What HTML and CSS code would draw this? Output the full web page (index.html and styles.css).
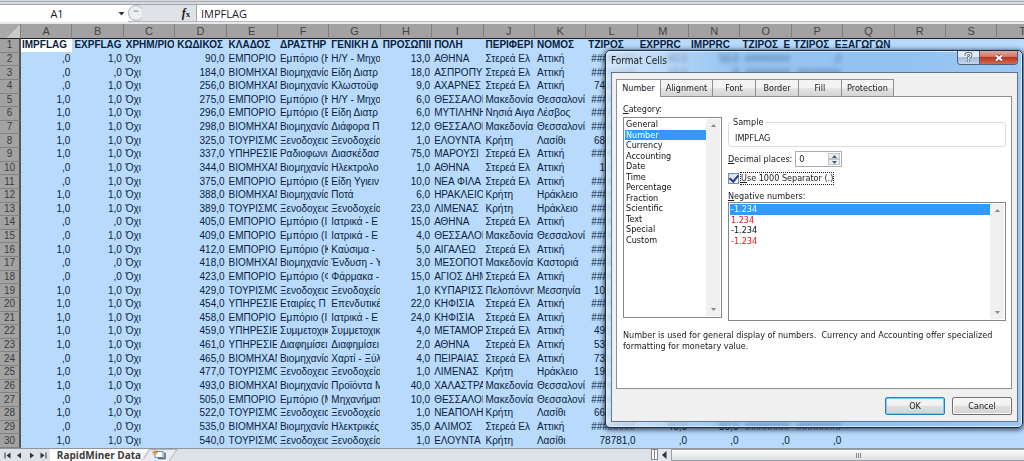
FILE: index.html
```
<!DOCTYPE html>
<html lang="en">
<head>
<meta charset="utf-8">
<title>RapidMiner Data</title>
<link rel="stylesheet" href="styles.css">
</head>
<body>
<div class="app">
  <header class="formula-bar">
    <div class="name-box">
      <input class="name-input" type="text" value="A1" aria-label="Name box">
      <button class="name-arrow" type="button" aria-label="Name list"><svg width="7" height="4" viewBox="0 0 7 4"><path d="M0.5 0h6L3.5 3.6z" fill="#333"/></svg></button>
    </div>
    <div class="fx-box">
      <svg class="fx-handle" width="14" height="16" viewBox="0 0 14 16"><circle cx="8" cy="8" r="7.5" fill="#eceff2" stroke="#b3b8be"/><path d="M5 7a3 2 0 0 1 6 0z" fill="#b3b8be"/></svg>
      <button class="fx-button" type="button" aria-label="Insert function"><i>f</i><small>x</small></button>
    </div>
    <input class="formula-input" type="text" value="IMPFLAG" aria-label="Formula bar">
  </header>

  <main class="sheet">
    <table class="grid">
      <thead><tr id="letters"></tr></thead>
      <tbody id="rows"></tbody>
    </table>
  </main>

  <footer class="tab-bar">
    <div class="sheet-nav">
      <button type="button" aria-label="First sheet"><svg width="7" height="7" viewBox="0 0 7 7"><path d="M0.5 0.5h1v6h-1zM6.5 0.5v6l-4-3z" fill="#333"/></svg></button>
      <button type="button" aria-label="Previous sheet"><svg width="7" height="7" viewBox="0 0 7 7"><path d="M5 0.5v6l-4-3z" fill="#333"/></svg></button>
      <button type="button" aria-label="Next sheet"><svg width="7" height="7" viewBox="0 0 7 7"><path d="M2 0.5v6l4-3z" fill="#333"/></svg></button>
      <button type="button" aria-label="Last sheet"><svg width="7" height="7" viewBox="0 0 7 7"><path d="M0.5 0.5v6l4-3zM5.5 0.5h1v6h-1z" fill="#333"/></svg></button>
    </div>
    <button class="sheet-tab" type="button">RapidMiner Data</button>
    <button class="new-sheet" type="button" aria-label="New sheet">
      <svg width="36" height="12" viewBox="0 0 36 12"><path d="M-2 12L6 0.500h27L25 12" fill="#e9ecf0" stroke="#b0b5bb"/><path d="M11 2.500h8v6h-8z" fill="#fff" stroke="#6b86ae"/><path d="M14 9.500h7v-6" fill="none" stroke="#4a6796" stroke-width="1.500"/><path d="M11 0.500v6M8 3.500h6M9 1.500l4 4M13 1.500l-4 4" stroke="#d9913a"/></svg>
    </button>
    <div class="scroll">
      <span class="split"></span>
      <button class="scroll-left" type="button" aria-label="Scroll left"><svg width="5" height="8" viewBox="0 0 5 8"><path d="M4.500 0v8L0 4z" fill="#333"/></svg></button>
      <div class="scroll-thumb"><i></i><i></i><i></i></div>
    </div>
  </footer>

  <section class="dialog" role="dialog" aria-labelledby="dialog-title">
    <div class="title-bar">
      <h1 id="dialog-title">Format Cells</h1>
      <div class="window-buttons">
        <button class="help" type="button" aria-label="Help"><svg width="9" height="11" viewBox="0 0 9 11"><path d="M2 4V3.300Q2 1.500 4.500 1.500T7 3.500Q7 4.600 4.700 5.500V7.200M4.700 8.200v1.600" fill="none" stroke="#47566b" stroke-width="2.800"/><path d="M2 4V3.300Q2 1.500 4.500 1.500T7 3.500Q7 4.600 4.700 5.500V7.200M4.700 8.200v1.600" fill="none" stroke="#fff" stroke-width="1.300"/></svg></button>
        <button class="close" type="button" aria-label="Close"><svg width="10" height="8" viewBox="0 0 10 8"><path d="M2 1.500l6 5M8 1.500l-6 5" stroke="#6b2a22" stroke-width="3.400"/><path d="M2 1.500l6 5M8 1.500l-6 5" stroke="#fff" stroke-width="2.200"/></svg></button>
      </div>
    </div>
    <div class="client">
      <div class="tabs" role="tablist">
        <button class="tab tab-active" type="button" role="tab" aria-selected="true">Number</button>
        <button class="tab tab-wide" type="button" role="tab">Alignment</button>
        <button class="tab" type="button" role="tab">Font</button>
        <button class="tab" type="button" role="tab">Border</button>
        <button class="tab" type="button" role="tab">Fill</button>
        <button class="tab tab-wide" type="button" role="tab">Protection</button>
      </div>
      <div class="panel">
        <div class="columns">
          <div class="category">
            <label for="category"><u>C</u>ategory:</label>
            <div class="list">
              <select id="category" size="12">
                <option>General</option><option selected>Number</option><option>Currency</option><option>Accounting</option><option>Date</option><option>Time</option><option>Percentage</option><option>Fraction</option><option>Scientific</option><option>Text</option><option>Special</option><option>Custom</option>
              </select>
              <div class="list-bar"><svg width="5" height="3" viewBox="0 0 5 3"><path d="M0 3h5L2.500 0z" fill="#888"/></svg><svg width="5" height="3" viewBox="0 0 5 3"><path d="M0 0h5L2.500 3z" fill="#888"/></svg></div>
            </div>
          </div>
          <div class="settings">
            <fieldset class="sample">
              <legend>Sample</legend>
              <output>IMPFLAG</output>
            </fieldset>
            <div class="decimals">
              <label for="decimals"><u>D</u>ecimal places:</label>
              <div class="spinner">
                <input id="decimals" type="text" value="0">
                <div class="spin-buttons">
                  <button type="button" aria-label="More"><svg width="5" height="3" viewBox="0 0 5 3"><path d="M0 3h5L2.500 0z" fill="#4a5578"/></svg></button>
                  <button type="button" aria-label="Fewer"><svg width="5" height="3" viewBox="0 0 5 3"><path d="M0 0h5L2.500 3z" fill="#4a5578"/></svg></button>
                </div>
              </div>
            </div>
            <div class="separator">
              <input id="separator" type="checkbox" checked>
              <label for="separator"><u>U</u>se 1000 Separator (.)</label>
            </div>
            <label for="negative"><u>N</u>egative numbers:</label>
            <div class="list">
              <select id="negative" size="4">
                <option selected>-1.234</option><option class="red">1.234</option><option>-1.234</option><option class="red">-1.234</option>
              </select>
              <div class="list-bar"><svg width="5" height="3" viewBox="0 0 5 3"><path d="M0 3h5L2.500 0z" fill="#888"/></svg><svg width="5" height="3" viewBox="0 0 5 3"><path d="M0 0h5L2.500 3z" fill="#888"/></svg></div>
            </div>
          </div>
        </div>
        <p class="hint">Number is used for general display of numbers.&nbsp; Currency and Accounting offer specialized formatting for monetary value.</p>
      </div>
      <div class="actions">
        <button class="action action-default" type="button">OK</button>
        <button class="action" type="button">Cancel</button>
      </div>
    </div>
  </section>
</div>
<script src="sheet.js"></script>
</body>
</html>
```
FILE: styles.css
```
* { box-sizing: border-box; }
html, body { height: 100%; margin: 0; }
body { overflow: hidden; color: #1a1a1a; font-family: "Open Sans", "Noto Sans", sans-serif; font-size: 11px; }
button, input, select { margin: 0; padding: 0; border: 0; background: none; color: inherit; font: inherit; outline: 0; }
svg { display: block; }

.app { position: relative; display: flex; flex-direction: column; height: 100%; min-height: 461px; overflow: hidden; }

/* Formula bar */
.formula-bar { flex: none; display: flex; height: 24px; padding: 5px 0 2px; background: linear-gradient(#d3d8dc 0, #d3d8dc 1px, #a9adb1 1px, #a9adb1 2px, #d5dade 2px, #d5dade 4px, #a2a6ab 4px, #a2a6ab 5px, #fff 5px, #fff 21px, #b5b9bd 21px, #b5b9bd 22px, #e6e8ea 22px); }
.name-box { display: flex; width: 128px; background: #fff; }
.name-input { flex: 1; width: 0; text-align: center; padding-bottom: 1px; }
.name-arrow { display: grid; place-items: center; width: 14px; }
.fx-box { display: flex; justify-content: space-between; width: 69px; margin-bottom: 1px; background: #dfe3e8; border-right: 1px solid #a2a6ab; border-radius: 8px 0 0 8px; }
.fx-button { width: 20px; font: bold 12px/14px "Liberation Serif", serif; text-align: center; }
.fx-button small { font-size: 9px; }
.formula-input { flex: 1; min-width: 0; padding: 0 4px 1px; }

/* Spreadsheet grid */
.sheet { flex: 1; min-height: 0; overflow: hidden; background: #b7dafd; }
.grid { width: 1049px; height: 100%; table-layout: fixed; border-collapse: separate; border-spacing: 0; font-family: "Liberation Sans", Arial, sans-serif; font-size: 10px; line-height: 12px; color: #0b1d3a; }
.grid th, .grid td { padding: 0; overflow: hidden; white-space: nowrap; text-align: left; }
.grid thead th { height: 15px; background: #a2a2a2; border-right: 1px solid #808080; border-bottom: 1px solid #222; font-size: 11px; font-weight: normal; text-align: center; color: #444; }
.grid thead th:first-child { width: 21px; background: linear-gradient(135deg, #a9a9a9 60%, #c9c9c9 60%); }
.grid tbody th { background: #a2a2a2; border-right: 2px solid #555; border-bottom: 1px solid #838383; font-weight: normal; text-align: center; color: #3c3c3c; }
.grid td { padding-left: 2px; border-right: 1px solid #bfd9f2; border-bottom: 1px solid #bcd9f6; }
.grid .num { padding: 0 1px 0 0; text-align: right; }
.grid .head td { font-weight: bold; border-right-color: transparent; }
.grid .head td:nth-child(2) { background: #fff; padding-left: 1px; }
.grid .head .spill { overflow: visible; }

/* Sheet tabs and scroll bar */
.tab-bar { flex: none; display: flex; height: 13px; background: #dde1e8; border-top: 1px solid #8f959c; }
.sheet-nav { display: flex; align-items: center; gap: 5px; width: 50px; padding-left: 4px; }
.sheet-tab { width: 98px; background: #fff; font-size: 10px; font-weight: bold; line-height: 12px; text-align: center; color: #3b3b3b; clip-path: polygon(0 0, 100% 0, 92% 100%, 0 100%); }
.new-sheet { margin-left: -4px; }
.scroll { display: flex; flex: 1; align-items: stretch; margin-left: 471px; background: #e4e7ec; }
.split { width: 7px; margin: 0 0 1px; background: linear-gradient(90deg, #fff 2px, #888 2px, #888 3px, #fff 3px); border: 1px solid #888; }
.scroll-left { display: grid; place-items: center; width: 13px; }
.scroll-thumb { display: flex; flex: 1; align-items: center; justify-content: center; gap: 1px; padding-left: 20px; border: 1px solid #9ba1aa; border-right: 0; background: linear-gradient(#fafbfc, #dadde2); }
.scroll-thumb i { width: 1px; height: 5px; background: #888; }

/* Format Cells dialog, floating over the sheet */
.dialog { position: absolute; top: 50px; right: 1px; width: 418px; padding: 0 4px 5px 5px; border: 1px solid #1c2c40; border-radius: 5px; background: linear-gradient(90deg, rgba(225, 238, 252, .75), rgba(120, 175, 230, .5) 30%, rgba(120, 178, 235, .6) 70%, rgba(150, 195, 240, .8)); backdrop-filter: blur(2px); box-shadow: inset 0 0 0 1px rgba(235, 245, 255, .8), 0 1px 5px 1px rgba(0, 10, 30, .7); font-family: "DejaVu Sans Condensed", "DejaVu Sans", sans-serif; font-size: 9px; line-height: 12px; }
.title-bar { display: flex; justify-content: space-between; height: 21px; }
.title-bar h1 { margin: 0; padding-top: 4px; font: inherit; font-size: 10px; }
.window-buttons { display: flex; height: 14px; border: 1px solid #4e6078; border-top: 0; border-radius: 0 0 4px 4px; overflow: hidden; }
.help, .close { display: grid; place-items: center; }
.help { width: 22px; background: linear-gradient(#dfeaf6 45%, #a5bdd7 50%, #c3d6ea); border-right: 1px solid #4e6078; }
.close { width: 37px; background: linear-gradient(#e0a397 5%, #cf7768 45%, #b93722 50%, #d26a50); }
.client { padding: 6px 5px 6px 4px; background: #f0f0f0; border: 1px solid #61748c; }
.tabs { display: flex; align-items: flex-end; }
.tab { width: 43px; height: 17px; border: 1px solid #8d8f93; border-left-width: 0; border-bottom: 0; background: linear-gradient(#f4f4f4 45%, #e2e2e2 55%, #d5d5d5); }
.tab-wide { width: 52px; }
.tab-active { width: 45px; height: 18px; border-left-width: 1px; background: #fff; margin-bottom: -1px; padding-bottom: 2px; position: relative; }
.panel { height: 293px; padding: 7px 5px 0 6px; border: 1px solid #8d8f93; background: #fff; }
.columns { display: flex; gap: 6px; height: 217px; }
.category { display: flex; flex-direction: column; width: 99px; height: 214px; }
.category label { height: 13px; line-height: 11px; }
.list { display: flex; flex: 1; min-height: 0; padding: 1px; border: 1px solid #828790; }
.list select { flex: 1; min-width: 0; appearance: none; overflow: hidden; border-radius: 0; background: #fff; }
.list option { height: 10px; min-height: 0; padding: 0 0 0 1px; line-height: 10px; -webkit-text-fill-color: #111; }
.list option:nth-child(odd) { height: 11px; }
.list option.red { -webkit-text-fill-color: #f0141e; }
.list option:checked { background: linear-gradient(#39f, #39f); -webkit-text-fill-color: #fff; }
.list-bar { display: flex; flex-direction: column; align-items: center; justify-content: space-between; width: 14px; padding: 5px 0; background: #f0f0f0; }
.settings { display: flex; flex: 1; flex-direction: column; padding-top: 12px; }
.sample { min-width: 0; height: 31px; margin: 0; padding: 4px 6px 0; border: 1px solid #d9dce0; border-radius: 3px; }
.sample legend { padding: 0 2px; margin-left: -4px; }
.sample output { display: block; line-height: 12px; }
.decimals { display: flex; align-items: center; gap: 3px; margin-top: 4px; }
.spinner { display: flex; width: 47px; height: 16px; padding: 1px; border: 1px solid #a9adb5; background: #fff; }
.spinner input { flex: 1; width: 0; padding-left: 2px; }
.spin-buttons { display: flex; flex-direction: column; width: 12px; }
.spin-buttons button { display: grid; flex: 1; place-items: center; border: 1px solid #c3c6cc; background: #eceef2; }
.separator { display: flex; align-items: center; gap: 1px; margin: 5px 0; }
.separator input { display: grid; place-items: center; width: 11px; height: 11px; appearance: none; border: 1px solid #7a8ca8; background: linear-gradient(135deg, #cfdcec, #f6f9fd); }
.separator input:checked::before { content: ""; width: 4px; height: 7px; margin-top: -2px; border: solid #27408b; border-width: 0 2px 2px 0; transform: rotate(40deg); }
.separator label { border: 1px dotted #222; line-height: 11px; }
.hint { margin: 9px 0 0; max-width: 372px; line-height: 11px; }
.actions { display: flex; justify-content: flex-end; gap: 7px; padding-top: 8px; }
.action { width: 60px; height: 18px; border: 1px solid #707070; border-radius: 2px; background: linear-gradient(#f4f4f4 45%, #e0e0e0 50%, #d3d3d3); box-shadow: inset 0 0 0 1px #fafafa; }
.action-default { border-color: #2c7fb4; box-shadow: inset 0 0 0 1px #6fd0f3; }
```
FILE: sheet.js
```
const letters = "ABCDEFGHIJKLMNOPQRST".split("");
const head = ["IMPFLAG", "EXPFLAG", "ΧΡΗΜ/ΡΙΟ", "ΚΩΔΙΚΟΣ", "ΚΛΑΔΟΣ", "ΔΡΑΣΤΗΡ", "ΓΕΝΙΚΗ Δ", "ΠΡΟΣΩΠΙΚΟ", "ΠΟΛΗ", "ΠΕΡΙΦΕΡΙ", "ΝΟΜΟΣ", "ΤΖΙΡΟΣ", "EXPPRC", "IMPPRC", "ΤΖΙΡΟΣ\u00a0 Ε", "ΤΖΙΡΟΣ\u00a0 ΕΞΑΓΩΓΩΝ"];
const hash = "########";
const data = `
,0|1,0|90,0|ΕΜΠΟΡΙΟ|Εμπόριο (Η|Η/Υ - Μηχα|13,0|ΑΘΗΝΑ|Στερεά Ελ|Αττική|#|40,0|50,0|#|,0
,0|,0|184,0|ΒΙΟΜΗΧΑΝ|Βιομηχανίας|Είδη Διατρ|18,0|ΑΣΠΡΟΠΥ|Στερεά Ελ|Αττική|#|10,0|,0|#|#
,0|1,0|256,0|ΒΙΟΜΗΧΑΝ|Βιομηχανίας|Κλωστοϋφ|9,0|ΑΧΑΡΝΕΣ|Στερεά Ελ|Αττική|741200,0
1,0|1,0|275,0|ΕΜΠΟΡΙΟ|Εμπόριο (Η|Η/Υ - Μηχα|6,0|ΘΕΣΣΑΛΟΝ|Μακεδονία|Θεσσαλονί|#
1,0|1,0|296,0|ΕΜΠΟΡΙΟ|Εμπόριο (Ε|Είδη Διατρ|6,0|ΜΥΤΙΛΗΝΗ|Νησιά Αιγα|Λέσβος|#
1,0|1,0|298,0|ΒΙΟΜΗΧΑΝ|Βιομηχανίας|Διάφορα Π|12,0|ΘΕΣΣΑΛΟΝ|Μακεδονία|Θεσσαλονί|#
1,0|1,0|325,0|ΤΟΥΡΙΣΜΟΣ|Ξενοδοχεια|Ξενοδοχεία|1,0|ΕΛΟΥΝΤΑ|Κρήτη|Λασίθι|681200,0
1,0|1,0|337,0|ΥΠΗΡΕΣΙΕΣ|Ραδιοφωνικ|Διασκέδασ|75,0|ΜΑΡΟΥΣΙ|Στερεά Ελ|Αττική|#
,0|1,0|344,0|ΒΙΟΜΗΧΑΝ|Βιομηχανίας|Ηλεκτρολο|1,0|ΑΘΗΝΑ|Στερεά Ελ|Αττική|12400,0
,0|1,0|375,0|ΕΜΠΟΡΙΟ|Εμπόριο (Ε|Είδη Υγιειν|10,0|ΝΕΑ ΦΙΛΑ|Στερεά Ελ|Αττική|#
1,0|1,0|388,0|ΒΙΟΜΗΧΑΝ|Βιομηχανίας|Ποτά|6,0|ΗΡΑΚΛΕΙΟ|Κρήτη|Ηράκλειο|#
1,0|1,0|389,0|ΤΟΥΡΙΣΜΟΣ|Ξενοδοχεια|Ξενοδοχεία|23,0|ΛΙΜΕΝΑΣ|Κρήτη|Ηράκλειο|#
,0|,0|405,0|ΕΜΠΟΡΙΟ|Εμπόριο (Ι|Ιατρικά - Ε|15,0|ΑΘΗΝΑ|Στερεά Ελ|Αττική|#
,0|1,0|409,0|ΕΜΠΟΡΙΟ|Εμπόριο (Ι|Ιατρικά - Ε|4,0|ΘΕΣΣΑΛΟΝ|Μακεδονία|Θεσσαλονί|#
1,0|1,0|412,0|ΕΜΠΟΡΙΟ|Εμπόριο (Κ|Καύσιμα -|5,0|ΑΙΓΑΛΕΩ|Στερεά Ελ|Αττική|#
,0|,0|418,0|ΒΙΟΜΗΧΑΝ|Βιομηχανίας|Ένδυση - Υ|3,0|ΜΕΣΟΠΟΤΑ|Μακεδονία|Καστοριά|#
,0|,0|423,0|ΕΜΠΟΡΙΟ|Εμπόριο (Φ|Φάρμακα -|15,0|ΑΓΙΟΣ ΔΗΜ|Στερεά Ελ|Αττική|#
1,0|1,0|429,0|ΤΟΥΡΙΣΜΟΣ|Ξενοδοχεια|Ξενοδοχεία|1,0|ΚΥΠΑΡΙΣΣ|Πελοπόννη|Μεσσηνία|101200,0
1,0|1,0|454,0|ΥΠΗΡΕΣΙΕΣ|Εταιρίες Π|Επενδυτικέ|22,0|ΚΗΦΙΣΙΑ|Στερεά Ελ|Αττική|#
1,0|1,0|458,0|ΕΜΠΟΡΙΟ|Εμπόριο (Ι|Ιατρικά - Ε|24,0|ΚΗΦΙΣΙΑ|Στερεά Ελ|Αττική|#
1,0|1,0|459,0|ΥΠΗΡΕΣΙΕΣ|Συμμετοχικ|Συμμετοχικ|4,0|ΜΕΤΑΜΟΡΦ|Στερεά Ελ|Αττική|491200,0
1,0|1,0|461,0|ΥΠΗΡΕΣΙΕΣ|Διαφημίσει|Διαφημίσει|2,0|ΑΘΗΝΑ|Στερεά Ελ|Αττική|531200,0
,0|1,0|465,0|ΒΙΟΜΗΧΑΝ|Βιομηχανίας|Χαρτί - Ξύλ|4,0|ΠΕΙΡΑΙΑΣ|Στερεά Ελ|Αττική|731200,0
1,0|1,0|477,0|ΤΟΥΡΙΣΜΟΣ|Ξενοδοχεια|Ξενοδοχεία|1,0|ΛΙΜΕΝΑΣ|Κρήτη|Ηράκλειο|191200,0
1,0|1,0|493,0|ΒΙΟΜΗΧΑΝ|Βιομηχανίας|Προϊόντα Μ|40,0|ΧΑΛΑΣΤΡΑ|Μακεδονία|Θεσσαλονί|#
,0|,0|505,0|ΕΜΠΟΡΙΟ|Εμπόριο (Μ|Μηχανήματ|10,0|ΘΕΣΣΑΛΟΝ|Μακεδονία|Θεσσαλονί|#
1,0|1,0|522,0|ΤΟΥΡΙΣΜΟΣ|Ξενοδοχεια|Ξενοδοχεία|1,0|ΝΕΑΠΟΛΗ|Κρήτη|Λασίθι|661200,0
,0|,0|535,0|ΒΙΟΜΗΧΑΝ|Βιομηχανίας|Ηλεκτρικές|35,0|ΑΛΙΜΟΣ|Στερεά Ελ|Αττική|#|40,0|50,0|#|#
1,0|1,0|540,0|ΤΟΥΡΙΣΜΟΣ|Ξενοδοχεια|Ξενοδοχεία|1,0|ΕΛΟΥΝΤΑ|Κρήτη|Λασίθι|78781,0|,0|,0|,0|,0`;

function cell(tag, text, className) {
  const el = document.createElement(tag);
  el.textContent = text;
  if (className) el.className = className;
  return el;
}

const letterRow = document.getElementById("letters");
["", ...letters].forEach((letter) => letterRow.append(cell("th", letter)));

const body = document.getElementById("rows");
function addRow(number, values, className) {
  const row = document.createElement("tr");
  if (className) row.className = className;
  row.append(cell("th", number));
  letters.forEach((_, i) => {
    const value = values[i] || "";
    const text = value === "#" ? hash : value;
    const spill = i === 15 && className === "head" ? "spill" : "";
    row.append(cell("td", text, /^(\d*,\d|#)/.test(value) ? "num" : spill));
  });
  body.append(row);
}

addRow(1, head, "head");
data.trim().split("\n").forEach((line, i) => {
  const values = line.split("|");
  values.splice(2, 0, "Όχι");
  addRow(i + 2, values);
});
```
